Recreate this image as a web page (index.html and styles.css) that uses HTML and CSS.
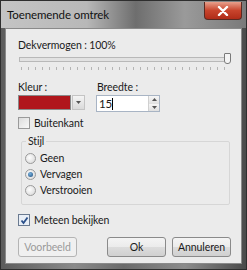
FILE: index.html
```html
<!DOCTYPE html>
<html lang="nl">
<head>
    <meta charset="UTF-8">
    <title>Toenemende omtrek</title>
    <link rel="stylesheet" href="styles.css">
</head>
<body>
    <div class="window">
        <div class="titlebar">
            <span class="title">Toenemende omtrek</span>
            <div class="close">
                <svg width="12" height="10" viewBox="0 0 12 10">
                    <path d="M2 1 L10 9 M10 1 L2 9" stroke="#fff" stroke-width="2.4" stroke-linecap="round"/>
                </svg>
            </div>
        </div>
        <div class="client">
            <div class="text">Dekvermogen : 100%</div>
            <div class="slider">
                <div class="track"></div>
                <div class="thumb"></div>
            </div>
            <div class="ticks"></div>

            <div class="row">
                <div class="field">
                    <div class="text">Kleur :</div>
                    <div class="colorpick">
                        <span class="swatch"></span>
                        <span class="drop">
                            <svg width="5" height="3" viewBox="0 0 5 3"><path d="M0 0 H5 L2.5 3 Z" fill="#555"/></svg>
                        </span>
                    </div>
                </div>
                <div class="field">
                    <div class="text">Breedte :</div>
                    <div class="spin">
                        <span class="value">15<span class="caret"></span></span>
                        <div class="arrows">
                            <span><svg width="5" height="3" viewBox="0 0 5 3"><path d="M0 3 H5 L2.5 0 Z" fill="#555"/></svg></span>
                            <span><svg width="5" height="3" viewBox="0 0 5 3"><path d="M0 0 H5 L2.5 3 Z" fill="#555"/></svg></span>
                        </div>
                    </div>
                </div>
            </div>

            <div class="check">
                <span class="box"></span>
                <span>Buitenkant</span>
            </div>

            <fieldset class="group">
                <legend>Stijl</legend>
                <div class="radio"><span class="dot"></span>Geen</div>
                <div class="radio"><span class="dot on"></span>Vervagen</div>
                <div class="radio"><span class="dot"></span>Verstrooien</div>
            </fieldset>

            <div class="check">
                <span class="box checked">
                    <svg width="9" height="9" viewBox="0 0 9 9"><path d="M1.5 4.5 L3.5 7 L7.5 1.5" stroke="#2a4f8a" stroke-width="1.8" fill="none"/></svg>
                </span>
                <span>Meteen bekijken</span>
            </div>

            <div class="buttons">
                <div class="btn disabled">Voorbeeld</div>
                <div class="spacer"></div>
                <div class="btn">Ok</div>
                <div class="btn">Annuleren</div>
            </div>
        </div>
    </div>
</body>
</html>
```

FILE: styles.css
```css
body {
    margin: 0;
    font-family: Lato, "Noto Sans", sans-serif;
    font-size: 10.5px;
    letter-spacing: -0.1px;
    color: #1a1a1a;
}
.window {
    width: 247px;
    height: 270px;
    box-sizing: border-box;
    background: linear-gradient(90deg, #5c5c5c 0%, #8a8a8a 30%, #6a6a6a 50%, #8c8c8c 75%, #4a4a4a 100%);
    border: 1px solid #2e2e2e;
    padding: 0 4px 5px 4px;
    display: flex;
    flex-direction: column;
}
.titlebar {
    height: 27px;
    display: flex;
    align-items: flex-start;
    background: linear-gradient(90deg, #c4c4c4 0%, #b8b8b8 35%, #6e6e6e 55%, #9a9a9a 75%, #7a7a7a 100%);
    margin: 0 -4px;
    padding: 0 4px;
}
.title {
    margin: 7px 0 0 2px;
    font-size: 11.5px;
    color: #111;
}
.close {
    margin: 1px 0 0 auto;
    width: 36px;
    height: 17px;
    border: 1px solid #5a2a22;
    border-top: none;
    border-radius: 0 0 4px 4px;
    background: linear-gradient(#e8a08c, #c8442c 50%, #b02c18);
    display: flex;
    align-items: center;
    justify-content: center;
}
.client {
    flex: 1;
    background: #ebebeb;
    border: 1px solid #8a8a8a;
    padding: 8px 12px 0 12px;
    display: flex;
    flex-direction: column;
}
.text {
    line-height: 16px;
}
.slider {
    position: relative;
    height: 12px;
    margin: 0 0 0 1px;
    width: 211px;
}
.track {
    margin-top: 4px;
    height: 3px;
    border: 1px solid #b8b8b8;
    background: #e2e2e2;
}
.thumb {
    position: absolute;
    right: -1px;
    top: 0;
    width: 5px;
    height: 9px;
    border: 1px solid #7a7a7a;
    border-radius: 1px 1px 3px 3px;
    background: #f4f4f4;
}
.ticks {
    margin: 2px 0 0 3px;
    width: 209px;
    height: 3px;
    background: repeating-linear-gradient(90deg, #b4b4b4 0 1px, transparent 1px 7px);
}
.row {
    display: flex;
    gap: 12px;
    margin-top: 9px;
}
.colorpick {
    display: flex;
    height: 15px;
}
.swatch {
    width: 51px;
    background: #b0161c;
    border: 1px solid #8a8a8a;
}
.drop {
    width: 11px;
    margin-left: 1px;
    border: 1px solid #c4c4c4;
    background: linear-gradient(#f4f4f4, #dadada);
    display: flex;
    align-items: center;
    justify-content: center;
}
.spin {
    width: 64px;
    height: 17px;
    box-sizing: border-box;
    border: 1px solid #a8b4c4;
    background: #fff;
    display: flex;
    margin-left: -1px;
}
.value {
    flex: 1;
    padding-left: 2px;
    line-height: 15px;
    font-size: 11.5px;
}
.caret {
    display: inline-block;
    width: 1px;
    height: 12px;
    background: #000;
    vertical-align: -2px;
}
.arrows {
    width: 10px;
    display: flex;
    flex-direction: column;
    border-left: 1px solid #d0d0d0;
}
.arrows span {
    flex: 1;
    display: flex;
    align-items: center;
    justify-content: center;
    background: linear-gradient(#f6f6f6, #e0e0e0);
}
.check {
    display: flex;
    align-items: center;
    gap: 4px;
    line-height: 16px;
}
.row + .check {
    margin-top: 3px;
}
.box {
    width: 10px;
    height: 10px;
    border: 1px solid #9a9a9a;
    background: linear-gradient(135deg, #dcdcdc, #f8f8f8);
    display: flex;
    align-items: center;
    justify-content: center;
}
.box.checked {
    background: #e8eef6;
    border-color: #6a7a90;
}
.group {
    margin: 3px 0 0 3px;
    width: 209px;
    box-sizing: border-box;
    border: 1px solid #d6d6d6;
    border-radius: 2px;
    padding: 2px 0 6px 3px;
}
.group legend {
    padding: 0 2px;
    margin-left: 1px;
    line-height: 14px;
}
.radio {
    display: flex;
    align-items: center;
    gap: 4px;
    height: 16px;
}
.dot {
    width: 9px;
    height: 9px;
    border-radius: 50%;
    border: 1px solid #9a9a9a;
    background: radial-gradient(circle at 40% 40%, #fdfdfd, #d4d4d4);
    display: flex;
    align-items: center;
    justify-content: center;
}
.dot.on::after {
    content: "";
    width: 5px;
    height: 5px;
    border-radius: 50%;
    background: radial-gradient(circle at 40% 35%, #7ab4e0, #1c4a7a);
}
.group + .check {
    margin-top: 7px;
}
.buttons {
    display: flex;
    gap: 6px;
    margin-top: 9px;
    width: 213px;
}
.spacer {
    flex: 1;
}
.btn {
    width: 57px;
    height: 18px;
    border: 1px solid #8a8a8a;
    border-radius: 3px;
    background: linear-gradient(#f4f4f4 0%, #ebebeb 50%, #dcdcdc 51%, #d0d0d0 100%);
    text-align: center;
    line-height: 18px;
}
.btn.disabled {
    color: #9a9a9a;
    border-color: #b4b4b4;
    background: #f0f0f0;
}
```
